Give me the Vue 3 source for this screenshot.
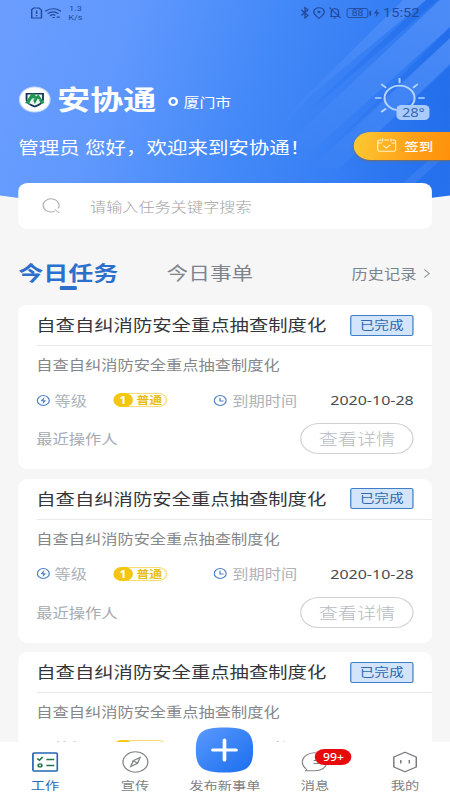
<script setup>
const tasks = [1, 2, 3].map((id) => ({
  id,
  title: '自查自纠消防安全重点抽查制度化',
  status: '已完成',
  level: '普通',
  due: '2020-10-28',
}))
</script>

<template>
  <div class="stage">
    <main class="content">
      <header class="hero">
        <svg class="hero-bg" viewBox="0 0 450 220" preserveAspectRatio="none">
          <defs>
            <linearGradient id="sky" gradientUnits="userSpaceOnUse" x1="0" y1="60" x2="430" y2="200">
              <stop offset="0" stop-color="#6a9dff" />
              <stop offset=".25" stop-color="#6098fd" />
              <stop offset=".55" stop-color="#4489f8" />
              <stop offset="1" stop-color="#2874f0" />
            </linearGradient>
            <linearGradient id="ray" gradientUnits="userSpaceOnUse" x1="450" y1="20" x2="290" y2="150">
              <stop offset="0" stop-color="#79a9ff" stop-opacity=".38" />
              <stop offset="1" stop-color="#79a9ff" stop-opacity="0" />
            </linearGradient>
            <linearGradient id="shade" gradientUnits="userSpaceOnUse" x1="450" y1="20" x2="300" y2="140">
              <stop offset="0" stop-color="#1763e4" stop-opacity=".5" />
              <stop offset="1" stop-color="#1763e4" stop-opacity="0" />
            </linearGradient>
            <clipPath id="edge"><path d="M0 0H450V195.500Q225 227 0 195.500Z" /></clipPath>
          </defs>
          <g clip-path="url(#edge)">
            <path fill="url(#sky)" d="M0 0H450V220H0Z" />
            <path fill="url(#ray)" d="M403 0H426L310 96L280 130L292 110Z" />
            <path fill="url(#shade)" d="M426 0H438L322 101L306 112Z" />
            <path fill="url(#ray)" d="M440 0H450V27L300 162L270 160Z" />
            <path fill="url(#shade)" d="M450 27V38L352 132L330 148Z" />
            <path fill="url(#ray)" d="M450 38V64L340 168L310 168Z" />
            <path fill="url(#shade)" d="M450 66V220H370L340 168Z" />
            <path fill="#6da0fb" opacity=".22" d="M440 150H450V152L405 192L395 190Z" />
          </g>
        </svg>

        <div class="status">
          <svg width="25" height="14" viewBox="0 0 25 14" fill="none" stroke="#234a99" stroke-width="1.200">
            <path d="M2.500 2H7L9 4.200V12H1V3.500Z" /><path d="M5 4.500V8M5 9V10.300" />
            <path d="M12 5.300Q18.500 .2 25 5.300M14 7.600Q18.500 4 23 7.600M16 9.800Q18.500 7.800 20.500 9.400" />
            <path d="M18 11.500H20M21.500 11.200H24" />
          </svg>
          <span class="speed">1.3<br />K/s</span>
          <svg class="status-icons" width="66" height="14" viewBox="0 0 66 14" fill="none" stroke="#224a9a" stroke-width="1.100">
            <path d="M1 4L6.500 9.500L4 12V1.500L6.500 4L1 9.500" />
            <path d="M15.500 12.300Q11.200 8.500 11.200 6A4.300 4.300 0 0 1 19.800 6Q19.800 8.500 15.500 12.300Z" /><circle cx="15.500" cy="6" r=".8" />
            <path d="M24.500 10.500H32.500M25.500 10V6Q25.700 3 28.500 2.500Q31.500 3 31.500 6V10M27.500 12H29.500M24 1.500L33.300 12" />
            <rect x="38.500" y="2.500" width="17" height="9" rx="1.500" stroke-width=".8" />
            <path d="M57.500 5V9.500" stroke-width="1.500" />
            <path d="M63.500 2.500L60.500 7.500H62.800L61.800 11.500L65 6.300H62.800Z" fill="#224a9a" stroke="none" />
            <text x="47" y="10" class="battery">88</text>
          </svg>
          <span class="clock">15:52</span>
        </div>

        <div class="brand-row">
          <svg class="logo" width="27" height="27" viewBox="0 0 27 27">
            <circle cx="13.500" cy="13.500" r="12.500" fill="#fff" stroke="#c5dcff" />
            <path d="M6 7H21V14Q20.500 18.500 13.500 21.500Q6.500 18.500 6 14Z" fill="#17345b" />
            <path d="M7.500 8.500H19.500V14Q18.500 17.500 13.500 19.500Q8.500 17.500 7.500 14Z" fill="#e4f5e9" />
            <path d="M5.500 17L11 7.500H13L14.500 10.500L16.500 8.500L21.500 17L19 18L16 12.500L13.500 18L11.500 12L8.500 18Z" fill="#209653" />
            <path d="M9 18Q11.500 16 13 12M13.500 19Q16 17 17 13" fill="none" stroke="#fff" stroke-width=".8" />
          </svg>
          <h1>安协通</h1>
          <i class="ring"></i>
          <span class="city">厦门市</span>
          <div class="weather">
            <svg width="42" height="36" viewBox="0 0 42 36" fill="none" stroke="#b4d4ff" stroke-width="1.700" stroke-linecap="round">
              <circle cx="20.500" cy="20" r="12.300" />
              <path d="M20.500 .8V4.500M.8 20H5M36.500 20H40.500M6 6.500L9 9.300M35 6.500L32 9.300M6 33.500L9 31" />
            </svg>
            <span class="temp">28°</span>
          </div>
        </div>

        <div class="greet-row">
          <span class="greet">管理员 您好，欢迎来到安协通！</span>
          <button class="sign">
            <svg width="16" height="14" viewBox="0 0 16 14" fill="none" stroke="#fff3cf" stroke-width="1">
              <path d="M3.500 2H2Q.6 2 .6 3.500V11.500Q.6 13.200 2.200 13.200H13.800Q15.400 13.200 15.400 11.500V3.500Q15.400 2 14 2H12.500M6 2H10M4.500 .5V3.500M11.500 .5V3.500M.6 5H4M12 5H15.400M5 7.500L7.600 10L11 6.800" />
            </svg>
            <span>签到</span>
          </button>
        </div>
      </header>

      <div class="search">
        <svg width="16" height="16" viewBox="0 0 16 16" fill="none" stroke="#b0b0b0" stroke-width="1">
          <path d="M10.800 13.200A6.500 6.500 0 1 1 13.600 10.500M11 11.500L14.800 15" />
        </svg>
        <span>请输入任务关键字搜索</span>
      </div>

      <nav class="tabs">
        <span class="tab active">今日任务</span>
        <span class="tab">今日事单</span>
        <span class="history">历史记录
          <svg width="6" height="9" viewBox="0 0 6 9" fill="none" stroke="#878c94"><path d="M.8 .5L4.800 4.500L.8 8.500" /></svg>
        </span>
      </nav>

      <section class="list">
        <article v-for="task in tasks" :key="task.id" class="card">
          <div class="card-head">
            <h2>{{ task.title }}</h2>
            <span class="done">{{ task.status }}</span>
          </div>
          <p class="desc">{{ task.title }}</p>
          <div class="meta">
            <svg width="11" height="11" viewBox="0 0 11 11" fill="none" stroke="#4d7fc4">
              <circle cx="5.500" cy="5.500" r="4.900" /><path d="M6.200 2.500L3.800 5.800H7.300L5 8.500" fill="#356fc2" stroke-width=".7" />
            </svg>
            <span class="label">等级</span>
            <span class="level"><b>1</b><em>{{ task.level }}</em></span>
            <svg width="11" height="11" viewBox="0 0 11 11" fill="none" stroke="#4d7fc4">
              <circle cx="5.500" cy="5.500" r="4.900" /><path d="M5.300 2.800V5.900H8.300" />
            </svg>
            <span class="label">到期时间</span>
            <span class="date">{{ task.due }}</span>
          </div>
          <div class="foot">
            <span>最近操作人</span>
            <button class="detail">查看详情</button>
          </div>
        </article>
      </section>
    </main>

    <footer class="bar">
      <a class="item on">
        <svg width="22" height="20" viewBox="0 0 22 20" fill="none" stroke="#2465b5" stroke-width="1.400">
          <rect x="1" y="1" width="20" height="18" rx="1" />
          <path stroke="#26764d" d="M4.500 6.500L6.300 8.300L9 5M12 7.500H18.500M12 13.500H18.500" /><circle cx="6.800" cy="13.400" r="1.500" stroke="#26764d" />
        </svg>
        <span>工作</span>
      </a>
      <a class="item">
        <svg width="22" height="22" viewBox="0 0 22 22" fill="none" stroke="#85878a" stroke-width="1.100">
          <circle cx="11" cy="11" r="10.200" /><path d="M14.800 6.500L12.800 12.300L7.200 15.500L9.200 9.700ZM9.200 9.700L12.800 12.300" />
        </svg>
        <span>宣传</span>
      </a>
      <a class="item">
        <svg class="plus" width="48" height="46" viewBox="0 0 48 46">
          <defs><linearGradient id="add" x1="0" y1="0" x2="1" y2="1"><stop offset="0" stop-color="#5b99ff" /><stop offset="1" stop-color="#196eed" /></linearGradient></defs>
          <path fill="url(#add)" d="M24 .5C42 .5 47.500 5 47.500 23S42 45.500 24 45.500S.5 41 .5 23S6 .5 24 .5Z" />
          <path d="M24 13V33M14.500 23H33.500" stroke="#fff" stroke-width="3" stroke-linecap="round" />
        </svg>
        <span>发布新事单</span>
      </a>
      <a class="item">
        <svg width="22" height="22" viewBox="0 0 22 22" fill="none" stroke="#85878a" stroke-width="1.100">
          <path d="M4 17.800Q.8 15 .8 11A10 9.500 0 0 1 20.800 11.500Q20 19.800 10.500 19.800H3.500L4.500 18.200M10 9.500H15M10 12.500H15" />
        </svg>
        <i class="count">99+</i>
        <span>消息</span>
      </a>
      <a class="item">
        <svg width="22" height="22" viewBox="0 0 22 22" fill="none" stroke="#77797d" stroke-width="1.200" stroke-linejoin="round">
          <path d="M11 1.200L20.200 6V16L11 20.800L1.800 16V6ZM7.500 9V12.500M14.500 9V12.500" />
        </svg>
        <span>我的</span>
      </a>
    </footer>
  </div>
</template>

<style>
body {
  overflow: hidden;
}
</style>

<style scoped>
.stage {
  width: calc(450px / 1.22);
  height: 800px;
  transform: scaleX(1.22);
  transform-origin: 0 0;
  display: flex;
  flex-direction: column;
  background: #f6f6f6;
  font-family: 'Noto Sans', 'Noto Sans CJK SC', sans-serif;
  overflow: hidden;
}
.stage * {
  box-sizing: border-box;
}
svg {
  display: block;
  flex: none;
}
span {
  white-space: nowrap;
}
h1,
h2,
p {
  margin: 0;
}
button {
  border: 0;
  font: inherit;
  padding: 0;
}
.content {
  flex: 1;
  min-height: 0;
  overflow: hidden;
}
.hero {
  position: relative;
  height: 183px;
  color: #fff;
}
.hero-bg {
  position: absolute;
  left: 0;
  top: 0;
  width: 100%;
  height: 220px;
}
.status {
  position: relative;
  display: flex;
  align-items: center;
  height: 25px;
  padding: 0 25px;
  color: #224a9a;
}
.speed {
  font: 7.5px/9px Roboto, sans-serif;
  text-align: center;
  margin-left: 6px;
}
.status-icons {
  margin-left: auto;
}
.battery {
  font: 8.5px Roboto, sans-serif;
  fill: #224a9a;
  stroke: none;
  text-anchor: middle;
}
.clock {
  font: 12px/14px Roboto, sans-serif;
  margin-left: 2px;
}
.brand-row {
  position: relative;
  display: flex;
  align-items: center;
  height: 44px;
  margin-top: 53px;
  padding: 0 15px 0 14.5px;
}
.logo {
  margin-top: -2px;
}
h1 {
  font-size: 27px;
  line-height: 40px;
  font-weight: 700;
  margin: 0 0 0 5.500px;
}
.ring {
  width: 8px;
  height: 9px;
  border: 2px solid #fff;
  border-radius: 50%;
  margin: 3px 0 0 9.500px;
}
.city {
  font-size: 13px;
  line-height: 20px;
  margin: 4px 0 0 5px;
}
.weather {
  margin-left: auto;
  position: relative;
  width: 46.500px;
  height: 44px;
}
.temp {
  position: absolute;
  left: 18px;
  top: 27px;
  width: 27px;
  height: 15px;
  border-radius: 4px;
  background: #a9cbfb;
  color: #3869b4;
  font: 12px/15px 'Noto Sans', sans-serif;
  text-align: center;
}
.greet-row {
  position: relative;
  display: flex;
  align-items: center;
  justify-content: space-between;
  height: 30px;
  margin-top: 9px;
  padding-left: 15px;
}
.greet {
  font-size: 16.800px;
  line-height: 24px;
  margin-top: 3px;
}
.sign {
  width: 79px;
  height: 28px;
  display: flex;
  align-items: center;
  gap: 6.500px;
  padding: 0 0 2px 19px;
  color: #fff;
  font-size: 11.900px;
  font-weight: 500;
  border-radius: 14px 0 0 14px;
  background: linear-gradient(100deg, #fcca32, #ff9d17 65%, #ff910a);
  box-shadow: 0 1px 2px #7b6b53;
}
.search {
  position: relative;
  display: flex;
  align-items: center;
  height: 46px;
  margin: 0 14.750px;
  padding: 0 19px;
  gap: 24px;
  border-radius: 8px;
  background: #fff;
  color: #a2a2a2;
  font-size: 13.250px;
  font-weight: 300;
}
.tabs {
  display: flex;
  align-items: center;
  height: 76px;
  padding: 12px 15.500px 0 15px;
  color: #7e848c;
}
.tab {
  position: relative;
  font-size: 17.800px;
  line-height: 28px;
  margin-left: 39.500px;
}
.tab.active {
  margin-left: 0;
  font-size: 20.500px;
  font-weight: 700;
  color: #2d6fcc;
}
.tab.active::after {
  content: '';
  position: absolute;
  left: 34px;
  bottom: -3px;
  width: 14px;
  height: 4px;
  border-radius: 1px;
  background: #2d6fcc;
}
.history {
  margin-left: auto;
  display: flex;
  align-items: center;
  gap: 6px;
  font-size: 13.300px;
}
.list {
  padding: 0 14.750px;
  display: grid;
  gap: 9.700px;
}
.card {
  height: 164px;
  border-radius: 8px;
  background: #fff;
  padding-left: 15px;
}
.card-head {
  display: flex;
  align-items: center;
  justify-content: space-between;
  height: 41px;
  padding-right: 15px;
  border-bottom: 1px solid #e9e9e9;
}
h2 {
  font-size: 15.850px;
  line-height: 24px;
  font-weight: 400;
  color: #34363a;
  white-space: nowrap;
}
.done {
  width: 52.500px;
  height: 21px;
  line-height: 19px;
  text-align: center;
  font-size: 12px;
  color: #2c69ae;
  border: 1px solid #3f7ec5;
  border-radius: 2px;
  background: #d3e5fc;
}
.desc {
  height: 38px;
  line-height: 38px;
  font-size: 13.300px;
  color: #85878b;
}
.meta {
  display: flex;
  align-items: center;
  height: 32px;
  padding-right: 15px;
}
.label {
  font-size: 13.300px;
  color: #adb2ba;
  margin-left: 4px;
}
.level {
  display: flex;
  align-items: center;
  width: 44px;
  height: 14px;
  margin: 0 38.500px 0 21.500px;
  border: 1px solid #f5dc73;
  border-radius: 7px;
}
.level b {
  width: 16px;
  height: 14px;
  margin-left: -1px;
  border-radius: 7px;
  background: #f4c60f;
  color: #fff;
  font-size: 10px;
  line-height: 14px;
  text-align: center;
}
.level em {
  font-style: normal;
  font-size: 10.500px;
  font-weight: 700;
  line-height: 12px;
  color: #e9bd12;
  margin-left: 3px;
}
.date {
  margin-left: auto;
  font-size: 13.100px;
  color: #494c50;
}
.foot {
  display: flex;
  align-items: center;
  justify-content: space-between;
  height: 45px;
  padding-right: 15px;
  font-size: 13.300px;
  color: #a5aab2;
}
.detail {
  width: 93px;
  height: 31px;
  border: 1px solid #cfd1d3;
  border-radius: 16px;
  background: #fff;
  font-size: 15.700px;
  font-weight: 300;
  color: #b7bcc1;
}
.bar {
  position: relative;
  height: 58px;
  display: grid;
  grid-template-columns: repeat(5, 1fr);
  grid-template-rows: 58px;
  background: #fff;
}
.item {
  position: relative;
  display: flex;
  flex-direction: column;
  align-items: center;
  justify-content: flex-end;
  padding-bottom: 7px;
  font-size: 11.700px;
  line-height: 16px;
  color: #7d7f83;
}
.item > span {
  margin-top: 4px;
}
.item.on {
  color: #2d69b3;
}
.item.on svg {
  margin-bottom: 1px;
}
.item .count {
  position: absolute;
  left: 37px;
  top: 7px;
  width: 30px;
  height: 16px;
  border-radius: 8px;
  background: #e70b0d;
  color: #fff;
  font: 500 10px/16px 'Noto Sans', sans-serif;
  text-align: center;
}
</style>
